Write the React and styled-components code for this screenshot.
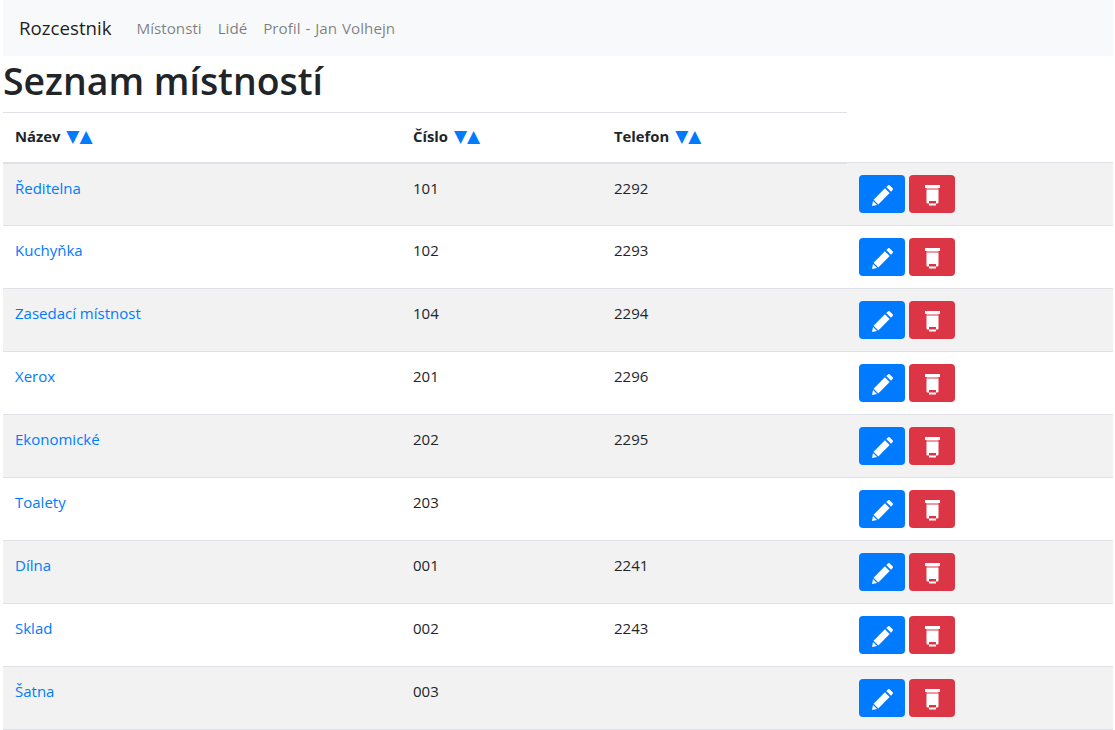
import React from 'react'
import styled, { createGlobalStyle } from 'styled-components'

const GlobalStyle = createGlobalStyle`
    body {
        margin: 0;
        background: #fff;
        color: #212529;
        font-family: "Open Sans", "Noto Sans", sans-serif;
        font-size: 15px;
        line-height: 1.5;
    }
`
const Page = styled.div`
    width: 1110px;
    margin-left: 3px;
`
const Navbar = styled.nav`
    display: flex;
    align-items: center;
    height: 56px;
    padding: 0 16px;
    background: #f8f9fa;
`
const Brand = styled.a`
    font-size: 18.7px;
    margin-right: 17px;
    color: rgba(0, 0, 0, .9);
`
const NavLink = styled.a`
    padding: 0 8px;
    font-size: 15.2px;
    word-spacing: 1px;
    color: rgba(0, 0, 0, .5);
`
const Heading = styled.h1`
    margin: 0 0 7px;
    padding-top: 1px;
    font-size: 37.4px;
    line-height: 48px;
    font-weight: 600;
`
const Table = styled.table`
    width: 100%;
    table-layout: fixed;
    border-collapse: collapse;
`
const Row = styled.tr`
    &:nth-child(odd) {
        background: #f2f2f2;
    }
`
const Th = styled.th`
    height: 50px;
    box-sizing: border-box;
    padding: 11px 12px 13px;
    text-align: left;
    font-size: 14.8px;
    line-height: 24px;
    font-weight: 700;
    border-top: 1px solid #dee2e6;
    border-bottom: 2px solid #dee2e6;
`
const Td = styled.td`
    padding: 12px;
    vertical-align: top;
    height: 63px;
    box-sizing: border-box;
    font-size: 15px;
    line-height: 24px;
    border-top: 1px solid #dee2e6;
    ${Row}:last-child & {
        border-bottom: 1px solid #dee2e6;
    }
`
const RoomLink = styled.a`
    color: #007bff;
`
const Arrows = styled.span`
    color: #007bff;
    font-family: "DejaVu Sans", sans-serif;
    font-size: 17px;
    line-height: 0;
    margin-left: 6px;
`
const Actions = styled.div`
    display: flex;
    gap: 4px;
`
const IconButton = styled.button`
    display: flex;
    align-items: center;
    justify-content: center;
    width: 46px;
    height: 38px;
    padding: 3px 0 0;
    border: 0;
    border-radius: 4px;
    color: #fff;
    background: ${({ $danger }) => ($danger ? '#dc3545' : '#007bff')};
`

const PencilIcon = () => (
    <svg width="21" height="21" viewBox="0 0 20 20" fill="#fff">
        <path d="M12.3 3.2L16.8 7.7 6 18.5 1.5 14z" />
        <path d="M1 15.2L4.8 19 0 20z" />
        <path d="M13.6 1.9L15.2.4a1.3 1.3 0 0 1 1.8 0l2.6 2.6a1.3 1.3 0 0 1 0 1.8L18.1 6.4z" />
    </svg>
)

const TrashIcon = () => (
    <svg width="15" height="21" viewBox="0 0 15 21" fill="#fff">
        <rect x="0" y="0" width="15" height="3" />
        <rect x="1.5" y="3" width="12" height="2" opacity=".5" />
        <path d="M1.5 5h12v12.5a1 1 0 0 1-1 1h-1.5V16H4v2.5H2.5a1 1 0 0 1-1-1z" />
        <rect x="4" y="18.5" width="7" height="2" />
    </svg>
)

const Sort = ({ label }) => (
    <Th>
        {label}
        <Arrows>▼▲</Arrows>
    </Th>
)

const rooms = [
    ['Ředitelna', '101', '2292'],
    ['Kuchyňka', '102', '2293'],
    ['Zasedací místnost', '104', '2294'],
    ['Xerox', '201', '2296'],
    ['Ekonomické', '202', '2295'],
    ['Toalety', '203', ''],
    ['Dílna', '001', '2241'],
    ['Sklad', '002', '2243'],
    ['Šatna', '003', ''],
]

export default function App() {
    return (
        <Page>
            <GlobalStyle />
            <Navbar>
                <Brand>Rozcestnik</Brand>
                <NavLink>Místonsti</NavLink>
                <NavLink>Lidé</NavLink>
                <NavLink>Profil - Jan Volhejn</NavLink>
            </Navbar>
            <Heading>Seznam místností</Heading>
            <Table>
                <colgroup>
                    <col width="398" />
                    <col width="201" />
                    <col width="245" />
                    <col width="266" />
                </colgroup>
                <thead>
                    <tr>
                        <Sort label="Název" />
                        <Sort label="Číslo" />
                        <Sort label="Telefon" />
                    </tr>
                </thead>
                <tbody>
                    {rooms.map(([name, number, phone]) => (
                        <Row key={number}>
                            <Td><RoomLink>{name}</RoomLink></Td>
                            <Td>{number}</Td>
                            <Td>{phone}</Td>
                            <Td>
                                <Actions>
                                    <IconButton><PencilIcon /></IconButton>
                                    <IconButton $danger><TrashIcon /></IconButton>
                                </Actions>
                            </Td>
                        </Row>
                    ))}
                </tbody>
            </Table>
        </Page>
    )
}
